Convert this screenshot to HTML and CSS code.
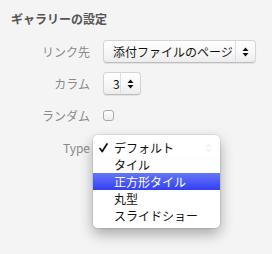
FILE: index.html
```html
<!DOCTYPE html>
<html lang="ja">
<head>
<meta charset="utf-8">
<link rel="stylesheet" href="styles.css">
</head>
<body>
<div class="panel">
  <h3 class="title">ギャラリーの設定</h3>
  <div class="form">
    <span class="lbl">リンク先</span>
    <div class="select wide"><span class="val">添付ファイルのページ</span><span class="arrows"><svg width="7" height="10" viewBox="0 0 7 10"><path d="M3.5 0.5 L6.5 4 L0.5 4 Z M0.5 6 L6.5 6 L3.5 9.5 Z" fill="#111"/></svg></span></div>
    <span class="lbl">カラム</span>
    <div class="select narrow"><span class="val">3</span><span class="arrows"><svg width="7" height="10" viewBox="0 0 7 10"><path d="M3.5 0.5 L6.5 4 L0.5 4 Z M0.5 6 L6.5 6 L3.5 9.5 Z" fill="#111"/></svg></span></div>
    <span class="lbl">ランダム</span>
    <div><span class="checkbox"></span></div>
    <span class="lbl">Type</span>
    <div class="select typesel"><span class="val"></span><span class="arrows"><svg width="7" height="10" viewBox="0 0 7 10"><path d="M3.5 0.5 L6.5 4 L0.5 4 Z M0.5 6 L6.5 6 L3.5 9.5 Z" fill="#111"/></svg></span></div>
  </div>
  <div class="menu">
    <div class="item"><svg class="check" width="9" height="10" viewBox="0 0 9 10"><path d="M1 5.5 L3.2 8.5 L8 1" fill="none" stroke="#111" stroke-width="1.7" stroke-linecap="round" stroke-linejoin="round"/></svg>デフォルト</div>
    <div class="item">タイル</div>
    <div class="item active">正方形タイル</div>
    <div class="item">丸型</div>
    <div class="item">スライドショー</div>
  </div>
</div>
</body>
</html>
```
FILE: styles.css
```css
html, body {
  margin: 0;
  padding: 0;
  background: #f4f4f4;
  width: 272px;
  height: 254px;
  overflow: hidden;
}
body {
  font-family: "Noto Sans CJK JP", "Noto Sans", sans-serif;
  font-size: 12px;
  color: #111;
}
.panel {
  position: relative;
  padding: 11px 0 0 11px;
}
.title {
  margin: 0;
  font-size: 12px;
  line-height: 16px;
  font-weight: bold;
  color: #555;
}
.form {
  margin-top: 13px;
  display: grid;
  grid-template-columns: 79px auto;
  grid-auto-rows: 23px;
  column-gap: 13px;
  row-gap: 9px;
  align-items: center;
}
.lbl {
  text-align: right;
  color: #8a8a8a;
  line-height: 16px;
}
.select {
  box-sizing: border-box;
  height: 23px;
  display: flex;
  align-items: center;
  background: linear-gradient(#ffffff, #f6f6f6 60%, #ececec);
  border: 1px solid #d4d4d4;
  border-bottom-color: #bdbdbd;
  border-radius: 4px;
  box-shadow: 0 1px 1px rgba(0,0,0,0.08);
}
.select .val {
  flex: 1;
  padding-left: 9px;
  line-height: 16px;
  white-space: nowrap;
}
.select .arrows {
  width: 19px;
  align-self: stretch;
  border-left: 1px solid #dedede;
  display: flex;
  align-items: center;
  justify-content: center;
}
.select .arrows svg { display: block; }
.wide { width: 153px; }
.narrow { width: 38px; }
.typesel { width: 116px; }
.checkbox {
  display: block;
  box-sizing: border-box;
  width: 11px;
  height: 11px;
  border: 1px solid #a9a9a9;
  border-radius: 3px;
  background: linear-gradient(#ffffff, #ededed);
}
.menu {
  position: absolute;
  left: 93px;
  top: 135px;
  width: 127px;
  box-sizing: border-box;
  padding: 4px 0;
  background: rgba(255,255,255,0.95);
  border-radius: 5px;
  box-shadow: 0 0 0 1px rgba(0,0,0,0.07), 0 6px 14px rgba(0,0,0,0.32);
}
.item {
  position: relative;
  height: 17px;
  line-height: 17px;
  padding-left: 21px;
  color: #111;
  white-space: nowrap;
}
.item.active {
  color: #fff;
  background: linear-gradient(#6577f7, #3240f5);
}
.check {
  position: absolute;
  left: 6px;
  top: 4px;
}
```
